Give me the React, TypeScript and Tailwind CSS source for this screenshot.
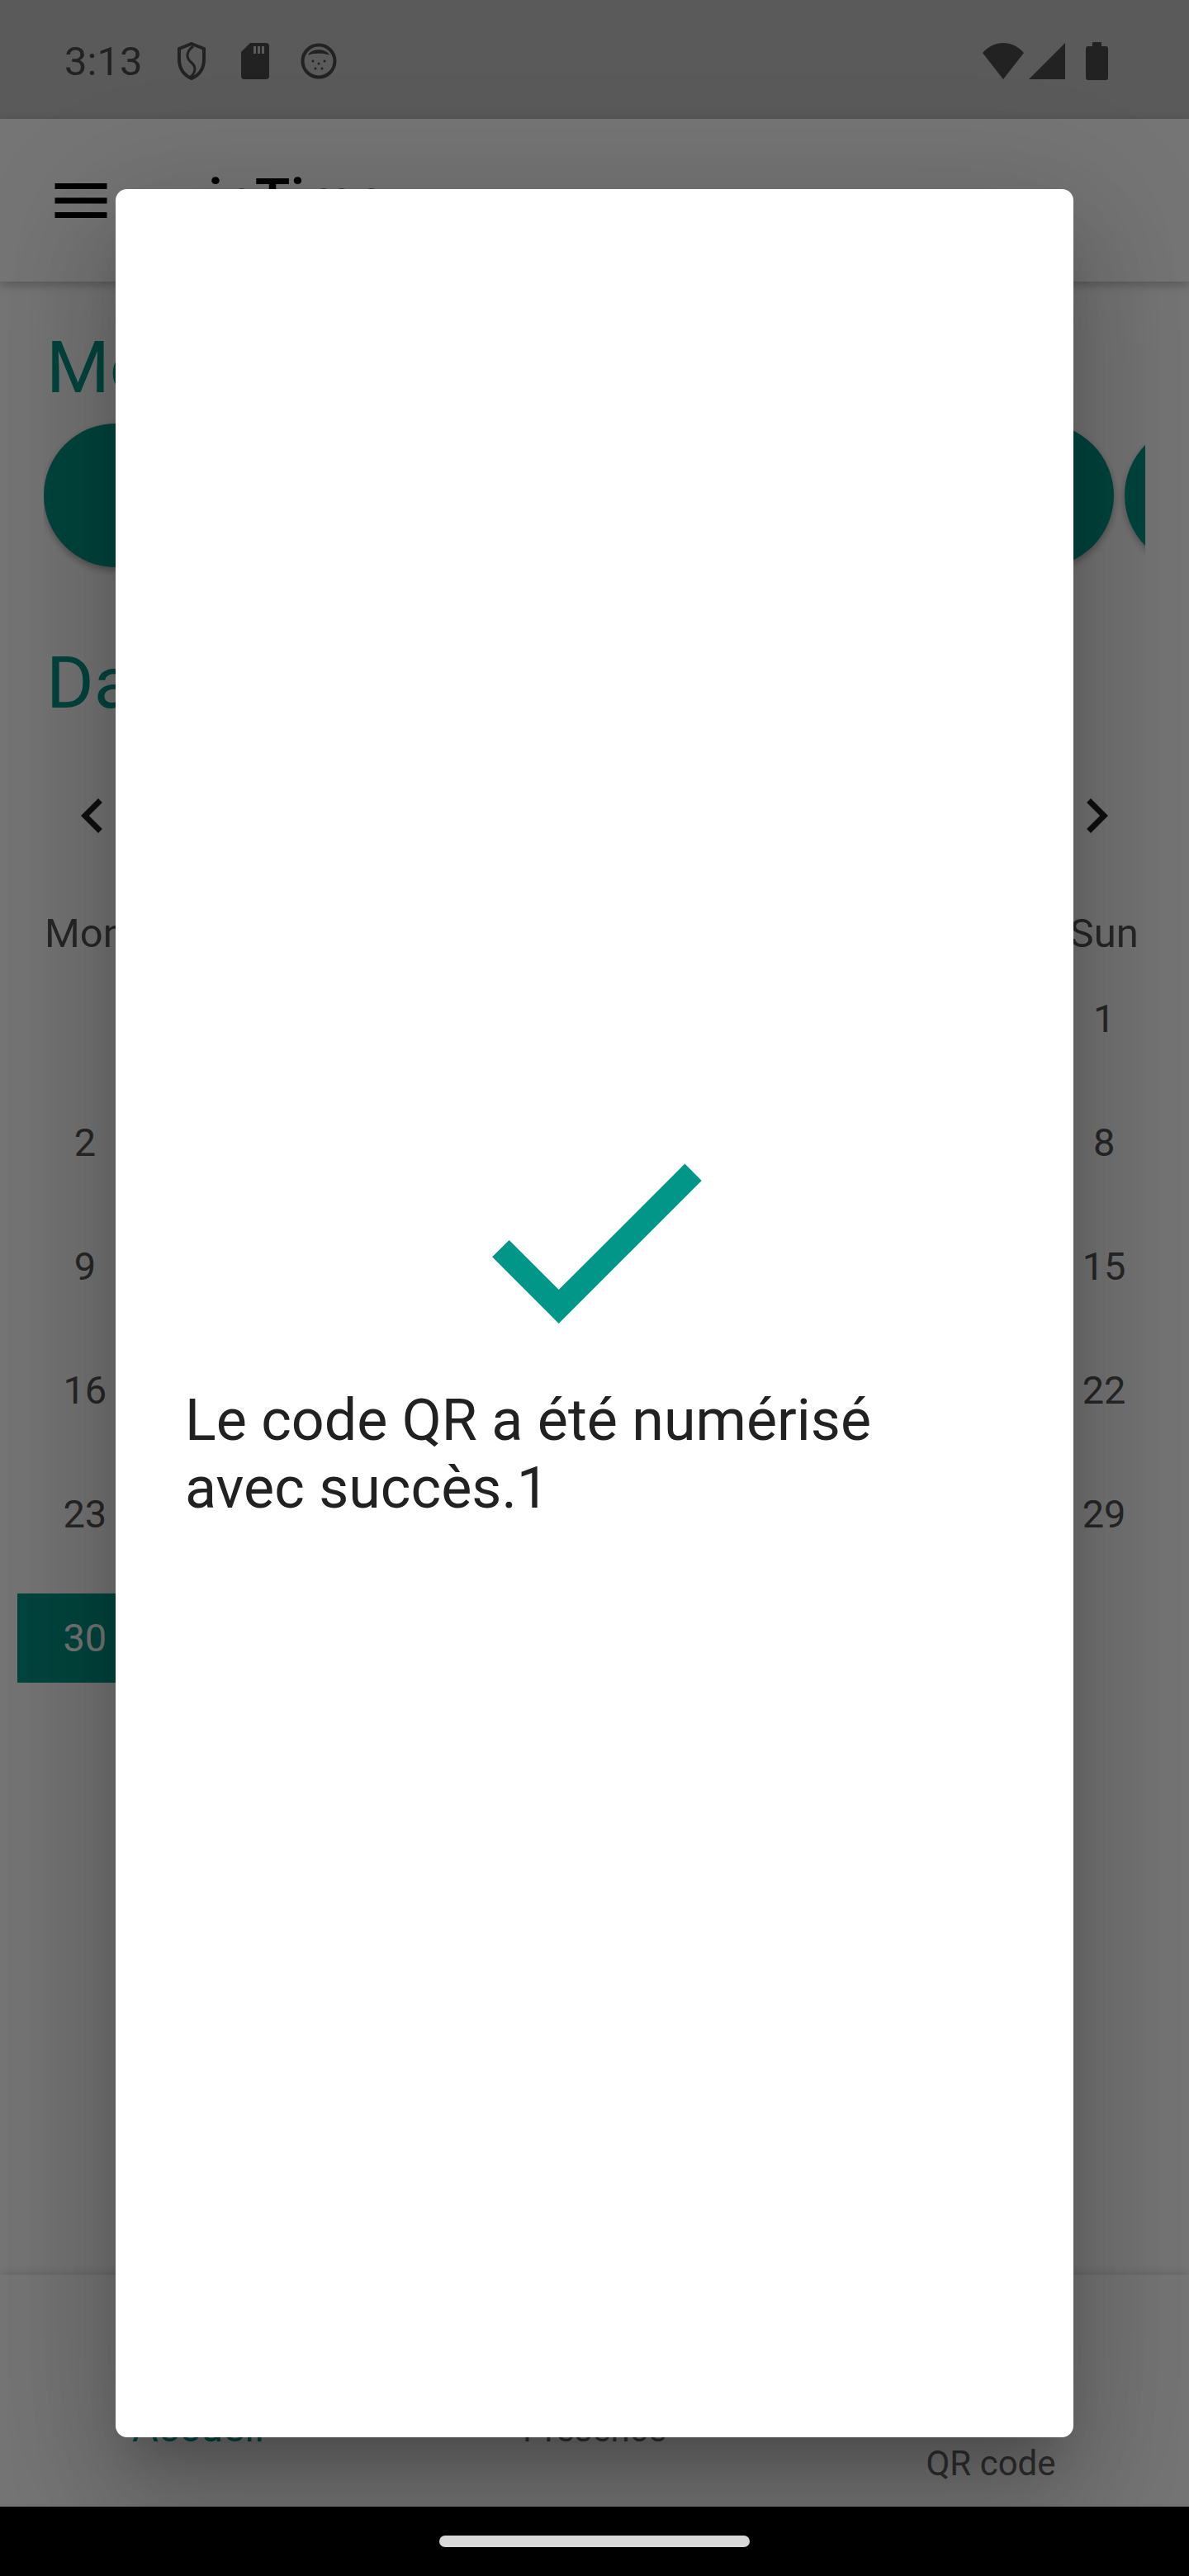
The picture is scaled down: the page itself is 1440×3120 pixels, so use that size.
import React from 'react';
import { Home, CalendarCheck, QrCode } from 'lucide-react';

const weekdays = ['Mon', 'Tue', 'Wed', 'Thu', 'Fri', 'Sat', 'Sun'];
const days: (number | null)[] = [null, null, null, null, null, null, ...Array.from({ length: 30 }, (_, i) => i + 1)];
const today = 30;

const StatusBar = () => (
    <div className="flex h-[144px] shrink-0 items-center justify-between bg-[#5a5a5a] pl-[78px] pr-[98px] pt-[4px] text-[#222]">
        <div className="flex items-center">
            <span className="text-[49px] leading-none">3:13</span>
            {/* shield */}
            <svg className="ml-[41px] h-[48px] w-[38px]" viewBox="0 0 38 48" fill="none" stroke="#222" strokeWidth="4">
                <path d="M19 3 L34 9 V22 C34 33 28 41 19 45 C10 41 4 33 4 22 V9 Z" />
                <path d="M21 6 C12 13 12 20 19 26 C25 31 24 38 17 44" strokeWidth="3" />
            </svg>
            {/* sd card */}
            <svg className="ml-[41px] h-[44px] w-[34px]" viewBox="0 0 34 44">
                <path d="M11 0 H30 A4 4 0 0 1 34 4 V40 A4 4 0 0 1 30 44 H4 A4 4 0 0 1 0 40 V11 Z" fill="#222" />
                <rect x="15" y="4" width="3" height="9" fill="#5a5a5a" />
                <rect x="20" y="4" width="3" height="9" fill="#5a5a5a" />
                <rect x="25" y="4" width="3" height="9" fill="#5a5a5a" />
            </svg>
            {/* round app icon */}
            <svg className="ml-[38px] h-[44px] w-[44px]" viewBox="0 0 44 44">
                <circle cx="22" cy="22" r="19.5" fill="none" stroke="#222" strokeWidth="4" />
                <path d="M9 15 C12 6 32 6 35 15 C30 12 14 12 9 15 Z" fill="#222" />
                <circle cx="15" cy="22" r="1.5" fill="#222" />
                <circle cx="22" cy="25" r="1.5" fill="#222" />
                <circle cx="29" cy="22" r="1.5" fill="#222" />
                <circle cx="18" cy="31" r="1.5" fill="#222" />
                <circle cx="26" cy="31" r="1.5" fill="#222" />
            </svg>
        </div>
        <div className="flex items-center">
            <svg className="h-[44px] w-[52px]" viewBox="0 0 52 44">
                <path d="M26 44 L1 12 C8 4 17 0 26 0 C35 0 44 4 51 12 Z" fill="#222" />
            </svg>
            <svg className="ml-[5px] h-[44px] w-[44px]" viewBox="0 0 44 44">
                <path d="M44 0 V44 H0 Z" fill="#222" />
            </svg>
            <svg className="ml-[25px] h-[46px] w-[27px]" viewBox="0 0 27 46">
                <rect x="8" y="0" width="11" height="6" rx="1" fill="#222" />
                <rect x="0" y="5" width="27" height="41" rx="3" fill="#222" />
            </svg>
        </div>
    </div>
);

const Calendar = () => (
    <div>
        <div className="mt-[68px] flex h-[84px] items-center justify-between px-[70px]">
            <svg className="h-[84px] w-[84px]" viewBox="0 0 24 24">
                <path fill="#212121" d="M15.41 7.41L14 6l-6 6 6 6 1.41-1.41L10.83 12z" />
            </svg>
            <span className="text-[56px] text-[#333]">September 2024</span>
            <svg className="h-[84px] w-[84px]" viewBox="0 0 24 24">
                <path fill="#212121" d="M10 6L8.59 7.41 13.17 12l-4.58 4.59L10 18l6-6z" />
            </svg>
        </div>

        <div className="mt-[72px] grid grid-cols-7">
            {weekdays.map((d) => (
                <div key={d} className="text-center text-[49px] leading-[57px] text-[#555]">
                    {d}
                </div>
            ))}
        </div>

        <div className="grid grid-cols-7 auto-rows-[150px]">
            {days.map((day, i) => (
                <div key={i} className="flex p-[21px]">
                    {day === today ? (
                        <div className="flex h-full w-full items-center justify-center bg-[#009688] text-[47px] text-white">
                            {day}
                        </div>
                    ) : (
                        <div className="flex h-full w-full items-center justify-center text-[47px] text-[#555]">
                            {day ?? ''}
                        </div>
                    )}
                </div>
            ))}
        </div>
    </div>
);

const BottomNav = () => (
    <div className="relative z-10 grid h-[281px] shrink-0 grid-cols-3 bg-white shadow-[0_-3px_10px_rgba(0,0,0,0.12)]">
        <div className="flex flex-col items-center pt-[60px]">
            <Home className="h-[84px] w-[84px] text-[#009688]" />
            <span className="mt-[13px] text-[49px] leading-[57px] text-[#009688]">Accueil</span>
        </div>
        <div className="flex flex-col items-center pt-[66px]">
            <CalendarCheck className="h-[84px] w-[84px] text-[#666]" />
            <span className="mt-[13px] text-[42px] leading-[49px] text-[#666]">Présence</span>
        </div>
        <div className="flex flex-col items-center pt-[107px]">
            <QrCode className="h-[84px] w-[84px] text-[#666]" />
            <span className="mt-[13px] text-[42px] leading-[49px] text-[#666]">QR code</span>
        </div>
    </div>
);

const SuccessDialog = () => (
    <div className="absolute inset-0 z-20 flex items-center justify-center bg-black/[0.54]">
        <div className="flex h-[2723px] w-[1160px] flex-col items-center justify-center rounded-[14px] bg-white pb-[8px] shadow-[0_84px_133px_10px_rgba(0,0,0,0.14),0_32px_161px_28px_rgba(0,0,0,0.12),0_38px_52px_-24px_rgba(0,0,0,0.2)]">
            <svg className="h-[346px] w-[346px]" viewBox="0 0 24 24">
                <path fill="#009688" d="M9 16.17L4.83 12l-1.42 1.41L9 19 21 7l-1.41-1.41z" />
            </svg>
            <p className="mt-[4px] w-full px-[84px] text-[70px] leading-[82px] text-[#212121]">
                Le code QR a été numérisé
                <br />
                avec succès.1
            </p>
        </div>
    </div>
);

export default function App() {
    return (
        <div className="flex h-[3120px] w-[1440px] flex-col overflow-hidden bg-black font-[Roboto,sans-serif]">
            <StatusBar />

            <div className="relative flex flex-1 flex-col bg-white">
                {/* app bar */}
                <div className="relative z-10 flex h-[197px] shrink-0 items-center bg-white pl-[56px] shadow-[0_4px_12px_rgba(0,0,0,0.25)]">
                    <svg className="h-[84px] w-[84px]" viewBox="0 0 24 24">
                        <path fill="#000" d="M3 18h18v-2H3v2zm0-5h18v-2H3v2zm0-7v2h18V6H3z" />
                    </svg>
                    <span className="ml-[112px] text-[70px] font-medium text-black">inTime</span>
                </div>

                <main className="flex-1">
                    <h2 className="mt-[52px] px-[56px] text-[88px] leading-[103px] text-[#009688]">Modules</h2>
                    <div className="mx-[53px] mt-[7px] overflow-hidden py-[10px]">
                        <div className="flex gap-[13px]">
                            {Array.from({ length: 8 }).map((_, i) => (
                                <div key={i} className="h-[174px] w-[174px] shrink-0 rounded-full bg-[#009688] shadow-[0_4px_8px_rgba(0,0,0,0.3)]" />
                            ))}
                        </div>
                    </div>

                    <h2 className="mt-[78px] px-[56px] text-[88px] leading-[103px] text-[#009688]">Dates</h2>
                    <Calendar />
                </main>

                <BottomNav />

                <SuccessDialog />
            </div>

            {/* system navigation */}
            <div className="flex h-[84px] shrink-0 items-center justify-center bg-black">
                <div className="h-[14px] w-[376px] rounded-full bg-[#e8e8e8]" />
            </div>
        </div>
    );
}
